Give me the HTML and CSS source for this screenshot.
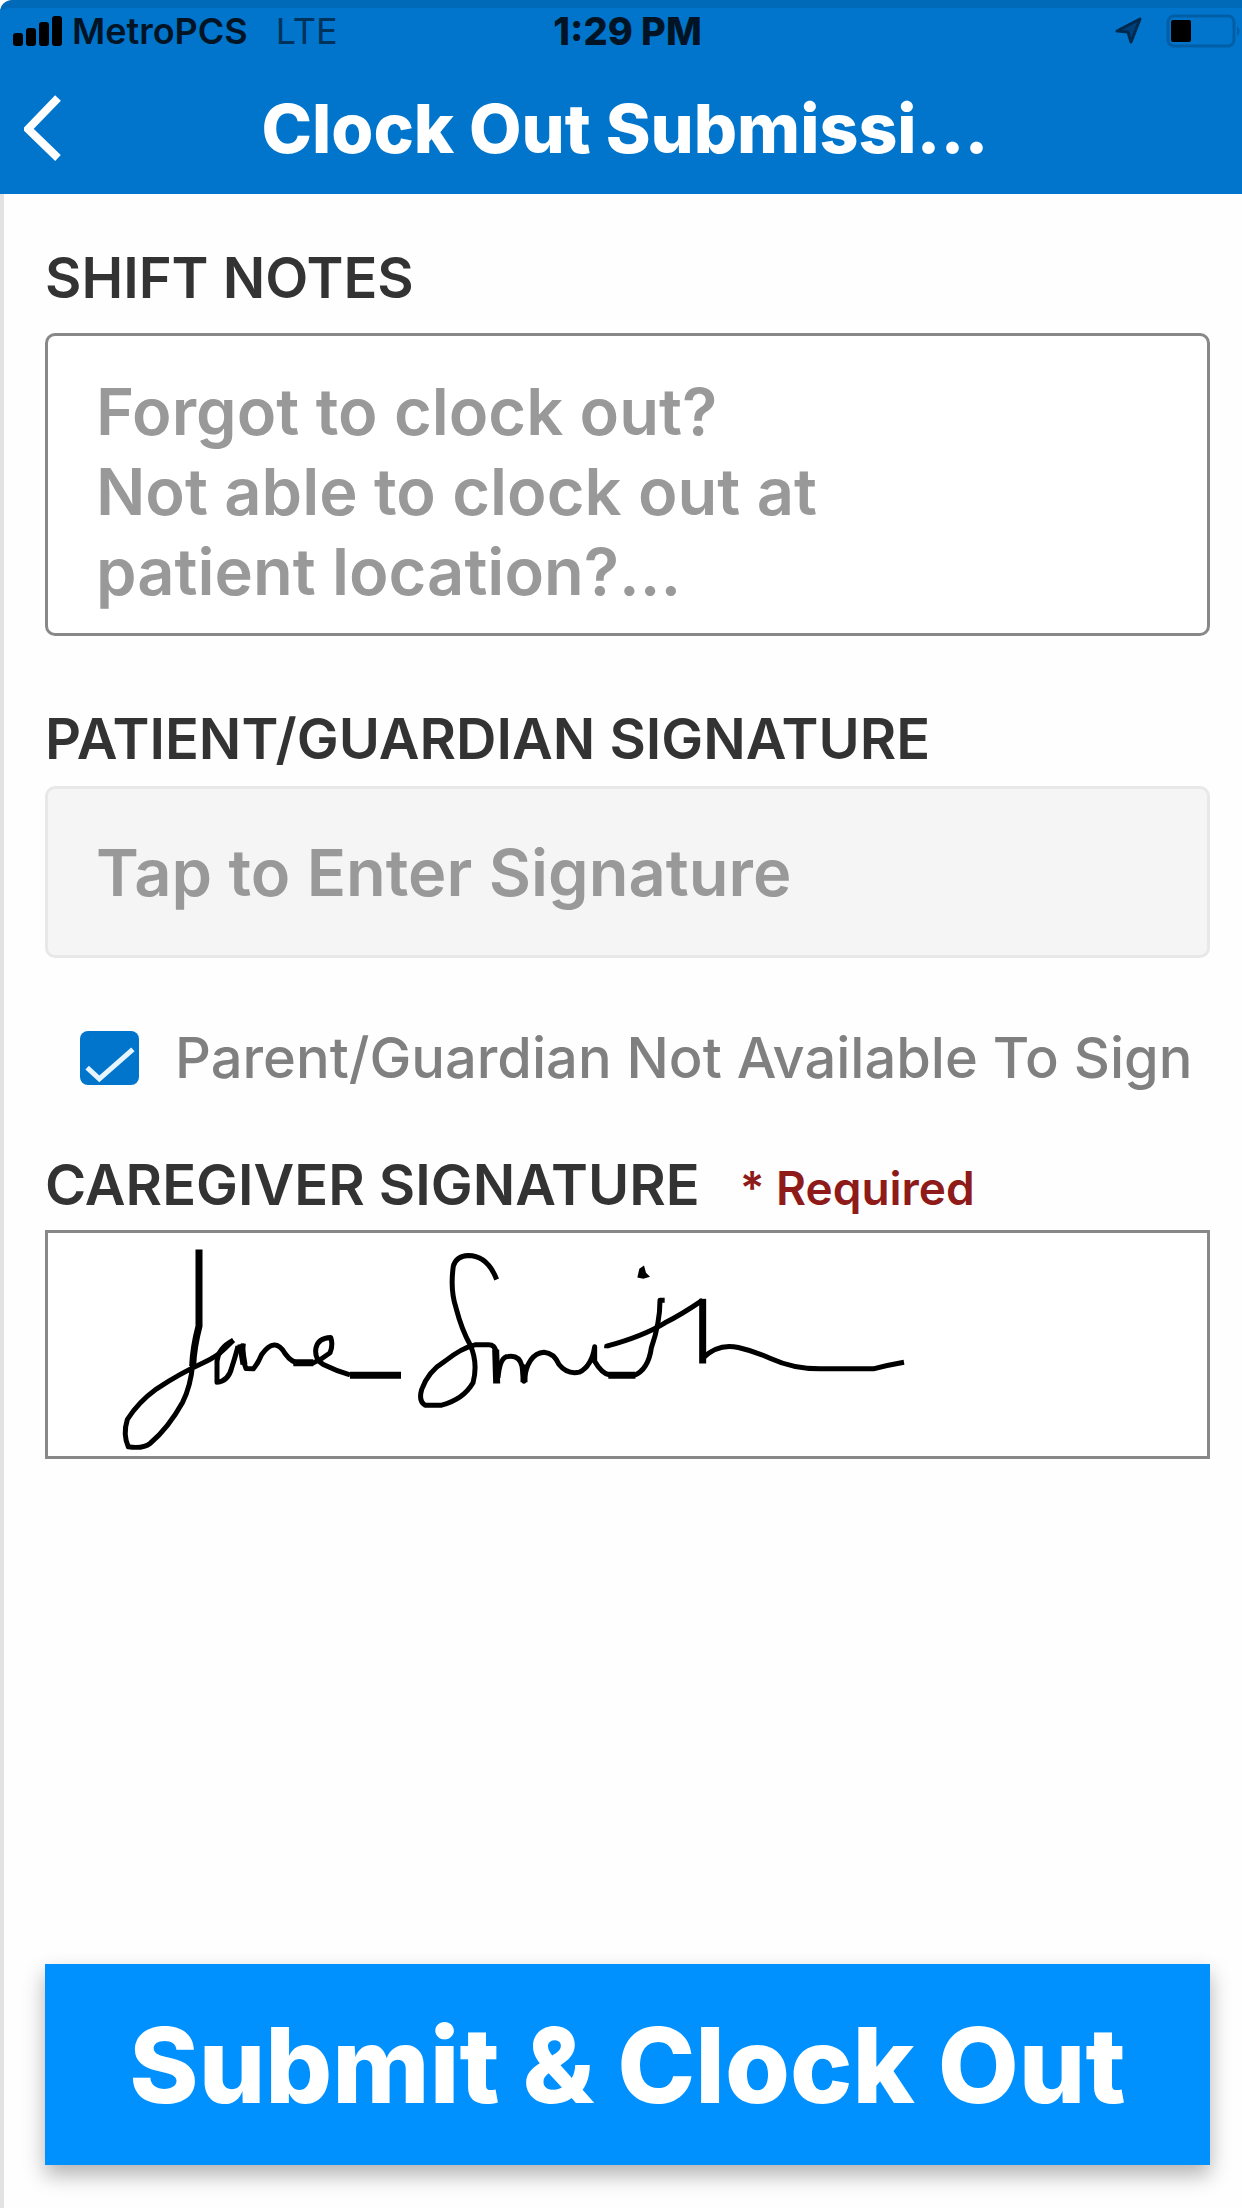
FILE: index.html
```html
<!DOCTYPE html>
<html lang="en">
<head>
  <meta charset="UTF-8">
  <meta name="viewport" content="width=device-width, initial-scale=1">
  <title>Clock Out Submission</title>
  <link rel="stylesheet" href="styles.css">
</head>
<body>
  <header class="header">
    <div class="status">
      <div class="status-left">
        <svg class="signal" viewBox="0 0 50 30">
          <rect x="0" y="17" width="10" height="13" rx="3"/>
          <rect x="13" y="12" width="10" height="18" rx="3"/>
          <rect x="26" y="6" width="10" height="24" rx="3"/>
          <rect x="39" y="0" width="10" height="30" rx="3"/>
        </svg>
        <span class="carrier">MetroPCS</span>
        <span class="network">LTE</span>
      </div>
      <span class="time">1:29 PM</span>
      <div class="status-right">
        <svg class="location" viewBox="0 0 30 30">
          <path class="location-arrow" d="M3 15 L26 3 L17 26 L14 16 Z"/>
        </svg>
        <svg class="battery" viewBox="0 0 76 34">
          <rect class="battery-case" x="2" y="2" width="66" height="30" rx="6"/>
          <rect x="5" y="6" width="20" height="22" rx="2"/>
          <path class="battery-tip" d="M71 12 Q76 17 71 22 Z"/>
        </svg>
      </div>
    </div>
    <div class="navbar">
      <button class="back" type="button" aria-label="Back">
        <svg viewBox="0 0 38 68"><path d="M34 4 L4 35 L34 64"/></svg>
      </button>
      <h1 class="title">Clock Out Submissi...</h1>
    </div>
  </header>

  <form class="form">
    <label class="label" for="notes">SHIFT NOTES</label>
    <textarea class="notes" id="notes" rows="3" placeholder="Forgot to clock out?&#10;Not able to clock out at&#10;patient location?..."></textarea>

    <label class="label label-patient" for="patientSignature">PATIENT/GUARDIAN SIGNATURE</label>
    <input class="patient-signature" id="patientSignature" type="text" placeholder="Tap to Enter Signature" readonly>

    <div class="check-row">
      <span class="check">
        <input class="checkbox" type="checkbox" id="notAvailable" checked>
        <svg class="tick" viewBox="0 0 58 54"><path d="M7 36 L19 47 L52 18"/></svg>
      </span>
      <label class="check-label" for="notAvailable">Parent/Guardian Not Available To Sign</label>
    </div>

    <div class="label-row">
      <span class="label" id="caregiverLabel">CAREGIVER SIGNATURE</span>
      <span class="required">* Required</span>
    </div>
    <button class="signature" type="button" aria-labelledby="caregiverLabel">
      <svg viewBox="-156 42 3477 666" preserveAspectRatio="xMinYMid meet">
        <path class="thick" d="M297 90 V320 Q280 385 278 440"/>
        <path d="M278 435 Q272 500 248 548 Q205 625 150 672 Q130 688 85 682 Q68 645 82 600 Q115 548 170 508 Q240 462 310 430 Q350 412 374 388 L400 362"/>
        <path d="M400 362 Q355 385 351 425 V488 Q385 485 395 445 Q408 405 414 380"/>
        <path d="M430 372 Q425 415 438 447 L460 448 Q475 430 485 405 Q525 350 555 402 Q575 430 600 432 H636 Q665 420 690 400 Q700 375 692 354 Q655 355 648 385 Q642 420 670 435 Q710 455 750 466"/>
        <path class="thick" d="M422 374 L432 435 M580 430 H640 M750 467 H903"/>
        <path d="M1190 180 Q1162 108 1105 108 Q1068 110 1060 140 Q1050 210 1068 265 Q1085 330 1110 375 Q1135 430 1119 490 Q1090 540 1025 557 H975 Q955 545 965 510 Q985 455 1035 425 Q1085 385 1125 376 H1160 Q1187 372 1188 402"/>
        <path class="thick" d="M1187 390 L1190 492"/>
        <path d="M1194 475 Q1200 410 1225 411 Q1258 406 1266 440 L1272 485 Q1282 402 1332 398 Q1362 400 1377 435 Q1402 466 1438 458 Q1475 440 1484 382 V425 Q1505 462 1530 467"/>
        <path class="thick" d="M1272 435 V488 M1525 467 H1606"/>
        <path d="M1602 468 Q1645 450 1654 385 Q1680 310 1680 242 H1694"/>
        <path d="M1520 386 V380 Q1630 350 1695 310 Q1745 285 1808 242"/>
        <path class="thick" d="M1808 238 V432"/>
        <path d="M1808 416 Q1855 370 1915 384 Q1960 394 2010 416 Q2080 448 2160 448 H2320 Q2365 436 2412 428"/>
        <path class="dot" d="M1618 148 L1632 138 L1638 160 L1650 172 L1630 178 L1612 174 Z"/>
      </svg>
    </button>

    <button class="submit" type="submit">Submit &amp; Clock Out</button>
  </form>
</body>
</html>
```

FILE: styles.css
```css
* {
  box-sizing: border-box;
}

body {
  margin: 0;
  min-height: 100vh;
  display: flex;
  flex-direction: column;
  background: #fefefe;
  font-family: Inter, "Liberation Sans", sans-serif;
}

button {
  font-family: inherit;
  padding: 0;
  border: none;
  cursor: pointer;
}

/* header */
.header {
  background: #0075cb;
  border-top: 8px solid #006ab8;
  border-top-left-radius: 12px;
  height: 194px;
}

.status {
  display: grid;
  grid-template-columns: 1fr auto 1fr;
  align-items: center;
  height: 46px;
  padding-left: 13px;
  color: #001426;
  font-size: 36px;
  line-height: 46px;
}

.status-left,
.status-right {
  display: flex;
  align-items: center;
}

.signal {
  width: 50px;
  height: 30px;
  margin-right: 9px;
}

.carrier {
  font-weight: 600;
  margin-right: 28px;
}

.network {
  color: #00335c;
}

.time {
  font-size: 38px;
  font-weight: 800;
}

.status-right {
  justify-content: flex-end;
  gap: 22px;
}

.location {
  width: 30px;
  height: 30px;
}

.location-arrow {
  fill: #00407a;
  stroke: #002a4d;
  stroke-width: 3;
  stroke-linejoin: round;
}

.battery {
  width: 76px;
  height: 34px;
}

.battery-case {
  fill: none;
  stroke: #005ea6;
  stroke-width: 3;
}

.battery-tip {
  fill: #005ea6;
}

.navbar {
  display: grid;
  grid-template-columns: 62px 1fr 54px;
  align-items: center;
  height: 140px;
  padding-top: 8px;
}

.back {
  display: flex;
  justify-content: flex-end;
  background: none;
}

.back svg {
  width: 38px;
  height: 68px;
  fill: none;
  stroke: #fff;
  stroke-width: 8;
}

.title {
  margin: 0;
  color: #fff;
  font-size: 68px;
  font-weight: 800;
  line-height: 80px;
  text-align: center;
  white-space: nowrap;
}

/* form */
.form {
  flex: 1;
  display: flex;
  flex-direction: column;
  padding: 49px 32px 43px 41px;
  border-left: 4px solid #e2e2e2;
}

.label {
  color: #333;
  font-size: 56px;
  font-weight: 600;
  line-height: 70px;
}

.notes,
.patient-signature {
  width: 100%;
  padding: 0 48px;
  border: 3px solid #888;
  border-radius: 10px;
  background: #fff;
  font-family: inherit;
  font-size: 65px;
  font-weight: 600;
  line-height: 80px;
  outline: none;
}

.notes {
  height: 303px;
  margin-top: 20px;
  padding-top: 36px;
  resize: none;
  overflow: hidden;
}

.notes::placeholder,
.patient-signature::placeholder {
  color: #999;
  opacity: 1;
}

.label-patient {
  margin-top: 68px;
}

.patient-signature {
  height: 172px;
  margin-top: 12px;
  border-color: #e8e8e8;
  background: #f5f5f5;
}

.check-row {
  display: flex;
  align-items: center;
  gap: 36px;
  margin-top: 64px;
  padding-left: 35px;
}

.check {
  display: flex;
  position: relative;
}

.checkbox {
  appearance: none;
  width: 59px;
  height: 54px;
  margin: 0;
  border-radius: 8px;
  background: #0075cb;
}

.tick {
  position: absolute;
  inset: 0;
  fill: none;
  stroke: #e6f4ff;
  stroke-width: 5;
  pointer-events: none;
}

.check-label {
  color: #808080;
  font-size: 56px;
  font-weight: 500;
  line-height: 72px;
  white-space: nowrap;
}

.label-row {
  display: flex;
  align-items: baseline;
  gap: 40px;
  margin-top: 56px;
}

.required {
  color: #8e1a1a;
  font-size: 46px;
  font-weight: 600;
}

.signature {
  width: 100%;
  height: 229px;
  margin-top: 10px;
  border: 3px solid #888;
  background: #fff;
}

.signature svg {
  display: block;
  width: 100%;
  height: 100%;
  fill: none;
  stroke: #000;
  stroke-width: 15;
  stroke-linejoin: round;
}

.signature .thick {
  stroke-width: 21;
}

.signature .dot {
  fill: #000;
  stroke: none;
}

.submit {
  width: 100%;
  height: 201px;
  margin-top: auto;
  background: #0091ff;
  color: #fff;
  font-size: 105px;
  font-weight: 800;
  box-shadow: 0 10px 20px rgba(0, 0, 0, 0.3);
}
```
